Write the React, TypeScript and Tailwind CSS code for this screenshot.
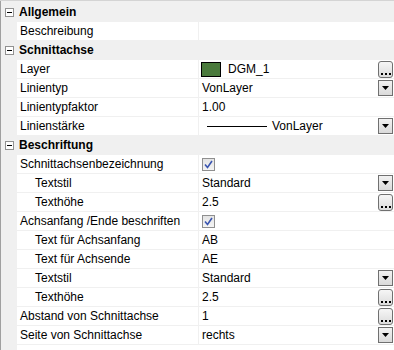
import React from "react";

type Row =
  | { kind: "cat"; label: string }
  | {
      kind: "prop";
      label: string;
      indent?: boolean;
      value?: React.ReactNode;
      btn?: "dots" | "drop";
    };

const Dots = () => (
  <div className="w-[15px] h-[17px] rounded-[3px] border border-[#707070] bg-gradient-to-b from-[#f6f6f6] to-[#dcdcdc] flex items-end justify-center pb-[2px]">
    <div className="flex gap-[2px]">
      <div className="w-[2px] h-[2px] bg-black" />
      <div className="w-[2px] h-[2px] bg-black" />
      <div className="w-[2px] h-[2px] bg-black" />
    </div>
  </div>
);

const Drop = () => (
  <div className="w-[15px] h-[16px] border border-[#707070] bg-gradient-to-b from-[#f2f2f2] to-[#dadada] flex items-center justify-center">
    <svg width="7" height="4" viewBox="0 0 7 4">
      <polygon points="0,0 7,0 3.5,4" fill="#000" />
    </svg>
  </div>
);

const Check = () => (
  <div className="w-[13px] h-[13px] border border-[#8f8f8f] bg-gradient-to-b from-[#e4e4e4] to-[#f4f4f4] flex items-center justify-center">
    <svg width="9" height="9" viewBox="0 0 9 9">
      <path d="M1 4.5 L3.5 7.5 L8 1" stroke="#3a55b0" strokeWidth="1.6" fill="none" />
    </svg>
  </div>
);

const rows: Row[] = [
  { kind: "cat", label: "Allgemein" },
  { kind: "prop", label: "Beschreibung" },
  { kind: "cat", label: "Schnittachse" },
  {
    kind: "prop",
    label: "Layer",
    value: (
      <div className="flex items-center">
        <div className="w-[20px] h-[15px] bg-[#4a7a3c] border border-black -ml-[1px]" />
        <span className="ml-[7px]">DGM_1</span>
      </div>
    ),
    btn: "dots",
  },
  { kind: "prop", label: "Linientyp", value: "VonLayer", btn: "drop" },
  { kind: "prop", label: "Linientypfaktor", value: "1.00" },
  {
    kind: "prop",
    label: "Linienstärke",
    value: (
      <div className="flex items-center">
        <div className="w-[60px] h-[1px] bg-black ml-[5px]" />
        <span className="ml-[5px]">VonLayer</span>
      </div>
    ),
    btn: "drop",
  },
  { kind: "cat", label: "Beschriftung" },
  { kind: "prop", label: "Schnittachsenbezeichnung", value: <Check /> },
  { kind: "prop", label: "Textstil", indent: true, value: "Standard", btn: "drop" },
  { kind: "prop", label: "Texthöhe", indent: true, value: "2.5", btn: "dots" },
  { kind: "prop", label: "Achsanfang /Ende beschriften", value: <Check /> },
  { kind: "prop", label: "Text für Achsanfang", indent: true, value: "AB" },
  { kind: "prop", label: "Text für Achsende", indent: true, value: "AE" },
  { kind: "prop", label: "Textstil", indent: true, value: "Standard", btn: "drop" },
  { kind: "prop", label: "Texthöhe", indent: true, value: "2.5", btn: "dots" },
  { kind: "prop", label: "Abstand von Schnittachse", value: "1", btn: "dots" },
  { kind: "prop", label: "Seite von Schnittachse", value: "rechts", btn: "drop" },
];

const Minus = () => (
  <div className="w-[9px] h-[9px] border border-[#919191] bg-white flex items-center justify-center">
    <div className="w-[5px] h-[1px] bg-black" />
  </div>
);

export default function App() {
  return (
    <div
      className="w-[394px] h-[350px] bg-white overflow-hidden text-[12px] text-black border-t border-[#d4d4d4]"
      style={{ fontFamily: '"Liberation Sans", Arial, sans-serif' }}
    >
      <div className="flex h-full">
        <div className="w-[2px] border-l border-[#a0a0a0] bg-[#f0f0f0] h-full" />
        <div className="flex-1 flex flex-col bg-[#f0f0f0] pt-[2px]">
          {rows.map((r, i) =>
            r.kind === "cat" ? (
              <div key={i} className="h-[19px] flex items-center bg-[#f0f0f0] border-b border-[#f0f0f0] shrink-0">
                <div className="w-[15px] flex justify-center pl-[1px] -ml-[1px]">
                  <Minus />
                </div>
                <span className="font-bold ml-[3px]">{r.label}</span>
              </div>
            ) : (
              <div key={i} className="h-[19px] flex shrink-0 bg-[#f0f0f0]">
                <div className="w-[15px]" />
                <div className="w-[182px] bg-white border-b border-r border-[#f0f0f0] flex items-center">
                  <span className={r.indent ? "pl-[18px]" : "pl-[3px]"}>{r.label}</span>
                </div>
                <div className="flex-1 bg-white border-b border-[#f0f0f0] flex items-center justify-between pl-[3px] pr-[1px]">
                  <div>{r.value}</div>
                  {r.btn === "dots" ? <Dots /> : r.btn === "drop" ? <Drop /> : null}
                </div>
              </div>
            )
          )}
          <div className="flex-1 flex bg-[#f0f0f0]">
            <div className="w-[15px]" />
            <div className="flex-1 bg-white" />
          </div>
        </div>
      </div>
    </div>
  );
}
